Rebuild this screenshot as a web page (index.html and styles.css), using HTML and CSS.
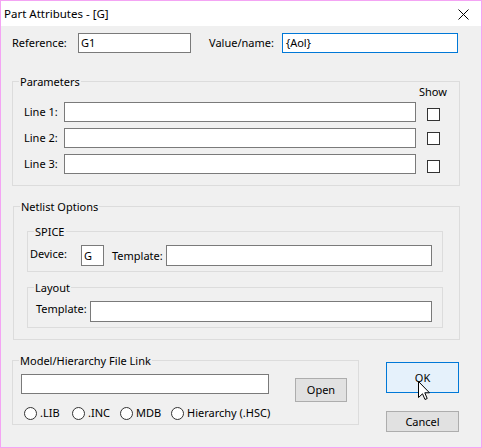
FILE: index.html
```html
<!DOCTYPE html>
<html>
<head>
<meta charset="utf-8">
<title>Part Attributes - [G]</title>
<link rel="stylesheet" href="styles.css">
</head>
<body>
<div class="window">
  <div class="titlebar">
    <span class="title">Part Attributes - [G]</span>
    <svg class="close" width="11" height="11" viewBox="0 0 11 11"><path d="M0.5 0.5L10.5 10.5M10.5 0.5L0.5 10.5" stroke="#000" stroke-width="1" fill="none"/></svg>
  </div>
  <div class="content">
    <div class="ref-row">
      <span class="lbl lbl-ref">Reference:</span>
      <span class="field f-ref">G1</span>
      <span class="lbl lbl-val">Value/name:</span>
      <span class="field focused f-val">{Aol}</span>
    </div>

    <div class="group params">
      <span class="legend">Parameters</span>
      <span class="show">Show</span>
      <div class="line-row r1"><span class="lbl lbl-line">Line 1:</span><span class="field f-line"></span><span class="check"></span></div>
      <div class="line-row r2"><span class="lbl lbl-line">Line 2:</span><span class="field f-line"></span><span class="check"></span></div>
      <div class="line-row r3"><span class="lbl lbl-line">Line 3:</span><span class="field f-line"></span><span class="check"></span></div>
    </div>

    <div class="group netlist">
      <span class="legend">Netlist Options</span>
      <div class="group sub spice">
        <span class="legend">SPICE</span>
        <div class="dev-row">
          <span class="lbl lbl-dev">Device:</span>
          <span class="field f-dev">G</span>
          <span class="lbl lbl-tpl">Template:</span>
          <span class="field f-tpl"></span>
        </div>
      </div>
      <div class="group sub layout">
        <span class="legend">Layout</span>
        <div class="lay-row">
          <span class="lbl lbl-ltpl">Template:</span>
          <span class="field f-ltpl"></span>
        </div>
      </div>
    </div>

    <div class="bottom">
      <div class="group model">
        <span class="legend">Model/Hierarchy File Link</span>
        <div class="file-row">
          <span class="field f-file"></span>
          <span class="btn open">Open</span>
        </div>
        <div class="radios">
          <span class="radio"><span class="circle"></span>.LIB</span>
          <span class="radio"><span class="circle"></span>.INC</span>
          <span class="radio"><span class="circle"></span>MDB</span>
          <span class="radio"><span class="circle"></span>Hierarchy (.HSC)</span>
        </div>
      </div>
      <div class="buttons">
        <span class="btn ok">OK<svg class="cursor" width="13" height="20" viewBox="0 0 13 20"><path d="M0.5 0.5L0.5 16.5L4.5 12.8L7 18.5L9.2 17.5L6.8 11.8L11.5 11.8Z" fill="#fff" stroke="#000" stroke-width="1" stroke-linejoin="miter"/></svg></span>
        <span class="btn cancel">Cancel</span>
      </div>
    </div>
  </div>
</div>
</body>
</html>
```

FILE: styles.css
```css
body {
  margin: 0;
  font-family: "Noto Sans", "Open Sans", sans-serif;
  font-size: 11px;
  line-height: 14px;
  color: #000;
}

.window {
  width: 482px;
  height: 448px;
  box-sizing: border-box;
  border: 1px solid #f4a4f4;
  background: #f0f0f0;
  overflow: hidden;
}

.titlebar {
  height: 25px;
  background: #fff;
  display: flex;
  align-items: center;
}

.title {
  margin-left: 3px;
  font-size: 11.5px;
}

.close {
  margin-left: auto;
  margin-right: 12px;
  align-self: flex-start;
  margin-top: 8px;
}

.content {
  padding: 7px 0 0 11px;
}

.lbl {
  white-space: nowrap;
}

.field {
  display: flex;
  align-items: center;
  box-sizing: border-box;
  border: 1px solid #7a7a7a;
  background: #fff;
  padding-left: 2px;
  white-space: nowrap;
}

.field.focused {
  border-color: #0078d7;
  padding-left: 3px;
}

/* Reference row */
.ref-row {
  display: flex;
  align-items: center;
  height: 20px;
}

.lbl-ref { width: 66px; }
.f-ref { width: 113px; height: 20px; }
.lbl-val { width: 73px; margin-left: 18px; }
.f-val { width: 176px; height: 20px; }

/* Group boxes */
.group {
  display: flex;
  flex-direction: column;
  box-sizing: border-box;
  border: 1px solid #dcdcdc;
}

.legend {
  align-self: flex-start;
  height: 14px;
  margin-top: -7px;
  margin-left: 6px;
  padding: 0 1px;
  background: #f0f0f0;
  white-space: nowrap;
}

/* Parameters */
.params {
  width: 448px;
  margin-top: 28px;
  padding-bottom: 11px;
}

.params .legend {
  margin-bottom: -4px;
}

.show {
  align-self: flex-end;
  width: 40px;
  margin-right: 6px;
  text-align: center;
  height: 14px;
}

.line-row {
  display: flex;
  align-items: flex-start;
  height: 20px;
  margin-top: 6px;
  padding-left: 11px;
}

.line-row.r1 { margin-top: 3px; }

.lbl-line {
  width: 40px;
  align-self: center;
}

.f-line {
  width: 352px;
  height: 20px;
}

.check {
  width: 13px;
  height: 13px;
  box-sizing: border-box;
  border: 1px solid #333;
  background: #fff;
  margin-left: 11px;
  margin-top: 6px;
}

.r2 .check { margin-top: 4px; }

/* Netlist */
.netlist {
  width: 447px;
  margin-left: 1px;
  margin-top: 20px;
  padding-bottom: 11px;
}

.sub {
  width: 416px;
  margin-left: 13px;
}

.spice {
  margin-top: 17px;
  padding-bottom: 5px;
}

.dev-row {
  display: flex;
  align-items: center;
  height: 21px;
  margin-top: 6px;
  padding-left: 2px;
}

.lbl-dev {
  width: 51px;
  align-self: flex-start;
  margin-top: 2px;
}

.f-dev { width: 23px; height: 21px; }
.lbl-tpl { width: 54px; margin-left: 8px; }
.f-tpl { width: 266px; height: 21px; }

.layout {
  margin-top: 15px;
  padding-bottom: 5px;
}

.lay-row {
  display: flex;
  align-items: flex-start;
  height: 21px;
  margin-top: 6px;
  padding-left: 8px;
}

.lbl-ltpl {
  width: 54px;
  margin-top: 1px;
}

.f-ltpl { width: 342px; height: 21px; }

/* Bottom section */
.bottom {
  display: flex;
  align-items: flex-start;
  margin-top: 20px;
}

.model {
  width: 347px;
  padding-bottom: 4px;
}

.file-row {
  display: flex;
  align-items: flex-start;
  margin-top: 6px;
  padding-left: 8px;
}

.f-file { width: 248px; height: 20px; }

.btn {
  display: flex;
  align-items: center;
  justify-content: center;
  box-sizing: border-box;
  border: 1px solid #adadad;
  background: #e1e1e1;
  white-space: nowrap;
}

.open {
  width: 52px;
  height: 24px;
  margin-left: 26px;
  margin-top: 4px;
}

.radios {
  display: grid;
  grid-template-columns: 48px 48px 51px auto;
  height: 14px;
  margin-top: 4px;
  padding-left: 11px;
}

.radio {
  display: flex;
  align-items: flex-start;
  gap: 3px;
  white-space: nowrap;
}

.circle {
  width: 13px;
  height: 13px;
  box-sizing: border-box;
  border: 1px solid #333;
  border-radius: 50%;
  background: #fff;
  margin-top: 1px;
}

.buttons {
  display: flex;
  flex-direction: column;
  width: 73px;
  margin-left: 27px;
}

.ok {
  position: relative;
  height: 31px;
  margin-top: 2px;
  background: #e5f1fb;
  border-color: #0078d7;
}

.cursor {
  position: absolute;
  left: 31px;
  top: 18px;
}

.cancel {
  height: 21px;
  margin-top: 18px;
}
```
